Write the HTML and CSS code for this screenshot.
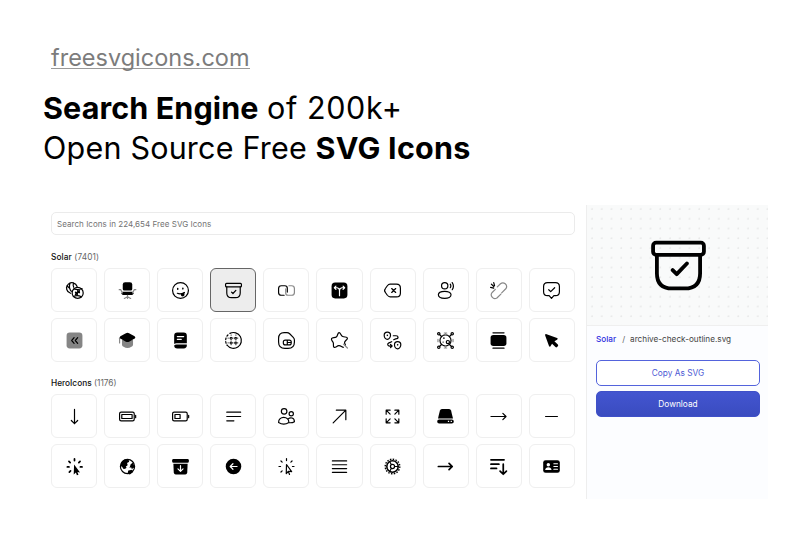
FILE: index.html
```html
<!DOCTYPE html>
<html lang="en">
<head>
<meta charset="utf-8">
<title>Free SVG Icons</title>
<link rel="stylesheet" href="styles.css">
</head>
<body>
<header class="hero">
  <a class="site"><span>freesvgicons.com</span></a>
  <h1><span class="line"><b class="t1">Search Engine</b> <span class="t2">of 200k+</span></span><span class="line"><span class="t3">Open Source Free</span> <b class="t4">SVG Icons</b></span></h1>
</header>
<main class="app">
  <section class="browser">
    <div class="search"><span>Search Icons in 224,654 Free SVG Icons</span></div>
    <h2 class="group"><b class="g1">Solar</b> <span class="g2">(7401)</span></h2>
    <div class="grid">
      <div class="tile"><svg viewBox="0 0 24 24"><path d="M7 15.500A6.800 6.800 0 1 1 15.300 7M6.500 2.500C5 6 5.500 10 8 13M11 2.500C10 4 10 6 11 8M2.500 6l3 3"/><circle cx="16" cy="15" r="7"/><path d="M11.500 10c3.500 1 7 1 10-.5M10.500 19.500c3.500-1.500 7-1.500 10 .5"/><path class="b" d="M13.500 17l4.500-4.500M13.500 14.500l2 2M16 12.500l2 2"/></svg></div>
      <div class="tile"><svg viewBox="0 0 24 24"><path class="f" d="M9 1.500h6q3 0 3 3V10q0 2-2 2H8q-2 0-2-2V4.500q0-3 3-3z"/><path class="f" d="M5.500 13.500h13l1 2q0 2.300-2 2.300h-11q-2 0-2-2.300z"/><path class="dim" d="M1.500 11h2l2 4M22.500 11h-2l-2 4M12 18v4M8 22l4-2 4 2"/></svg></div>
      <div class="tile"><svg viewBox="0 0 24 24"><circle cx="12" cy="12" r="10"/><path d="M8 15.500c3 1.200 6 .7 9-1"/><path class="f" d="M12.500 15.800l4.500-1.500v3a2.200 2.200 0 0 1-4.500 0z"/><ellipse class="f" cx="8.500" cy="10" rx="1" ry="1.400"/><ellipse class="f" cx="15" cy="9.500" rx="1" ry="1.400"/></svg></div>
      <div class="tile selected"><svg viewBox="0 0 24 24"><rect x="2" y="3" width="20" height="4.500" rx="1.200"/><path d="M3.500 7.500V15q0 6 6 6h5q6 0 6-6V7.500M9.500 14l1.800 1.800 3.700-4"/></svg></div>
      <div class="tile"><svg viewBox="0 0 24 24"><path d="M9 18H5.500Q2 18 2 14.500v-5Q2 6 5.500 6H10q3 0 3 3v5"/><path class="dim" d="M15 6h3.500Q22 6 22 9.500v5q0 3.500-3.500 3.500H14q-3 0-3-3v-5"/></svg></div>
      <div class="tile"><svg viewBox="0 0 24 24"><rect class="f" x="2" y="2" width="20" height="20" rx="4.500"/><path class="w" d="M12 18.500V12q0-3-3-3.500H6M12 12q0-3 3-3.500h3M7.500 6.500L5.500 8.500l2 2M16.500 6.500l2 2-2 2"/></svg></div>
      <div class="tile"><svg viewBox="0 0 24 24"><path d="M9 4h8q5 0 5 5v6q0 5-5 5H9q-2 0-3.500-2L3 14.500q-2-2.500 0-5L5.500 6Q7 4 9 4zM11 9.500l5 5M16 9.500l-5 5"/></svg></div>
      <div class="tile"><svg viewBox="0 0 24 24"><circle cx="11" cy="6" r="4"/><path d="M11 13c4.500 0 8 2 8 4.500S15.500 22 11 22s-8-1.500-8-4.500 3.500-4.500 8-4.500zM18 4c1 1.500 1 3 0 4.500M20.500 2c2 3 2 6 0 9"/></svg></div>
      <div class="tile"><svg viewBox="0 0 24 24"><path class="dim" d="M10.500 7.500l4-4q3-2.500 6 0t1 6l-5.500 5.500M8 10.500l-4 4q-2.500 3 0 6t6 1l5-5"/><path d="M2 8l4 1M6 2l1 4M3 4l3 3"/></svg></div>
      <div class="tile"><svg viewBox="0 0 24 24"><path d="M7 2h10q5 0 5 5v6.500q0 5-5 5h-2L12 22l-3-3.500H7q-5 0-5-5V7q0-5 5-5zM8.500 11l2.500 2.500L16 8.500"/></svg></div>
      <div class="tile"><svg viewBox="0 0 24 24"><rect class="g" x="2" y="2" width="20" height="20" rx="4"/><path d="M11.500 8.500L8.500 12l3 3.500M16 8.500L13 12l3 3.500"/></svg></div>
      <div class="tile"><svg viewBox="0 0 24 24"><path class="g" d="M5 11v6q0 2 2 3 5 3 10 0 2-1 2-3v-6z"/><path class="dim" d="M2 9v6"/><path class="f" d="M10 2.800q2-1 4 0l7 3.700q2 1.500 0 3l-7 4q-2 1-4 0l-7-4Q1 8 3 6.500z"/></svg></div>
      <div class="tile"><svg viewBox="0 0 24 24"><path class="f" d="M8 2h8q4 0 4 4v9.500H7q-2 0-3 1V6q0-4 4-4z"/><path class="f" d="M4 18.200q1-1.200 3-1.200h13v1q0 4-4 4H8q-4 0-4-3.800z"/><path class="w" d="M8 7h8M8 10.500h5"/></svg></div>
      <div class="tile"><svg viewBox="0 0 24 24"><path d="M4 18A10 10 0 1 0 7.500 3"/><path stroke-dasharray="2 2.500" d="M5 5a10 10 0 0 0-1 13"/><path class="dots" d="M9 5v15M15 5v15M5 9h15M5 15h15"/><path class="thin" d="M8.200 8.200h2v2h-2zM14 8.200h2v2h-2zM8.200 14h2v2h-2zM14 14h2v2h-2z"/></svg></div>
      <div class="tile"><svg viewBox="0 0 24 24"><path d="M9 2h3.500q2 0 3.500 1.500L20.500 8q1.500 1.500 1.500 3.500V14q0 8-8 8h-4q-8 0-8-8V9.500Q2 2 9 2z"/><path d="M10.500 11.500h5q2.500 0 2.500 2.500v1q0 2.500-2.500 2.500h-5Q8 17.500 8 15v-1q0-2.500 2.500-2.500zM13 11.500v6M13 14.500h5"/></svg></div>
      <div class="tile"><svg viewBox="0 0 24 24"><path d="M17 20.500c-2 0-3.500-2.500-6-2s-4.500 3-6 2 0-4-1-6-3-3-2-5 4-.5 6-2S9.500 2 11.500 2s2 4 4.500 5 6 0 6 2-3 3-3.500 5 1 2.500 1 4"/><path class="dim" d="M17 16.500l5 5"/></svg></div>
      <div class="tile"><svg viewBox="0 0 24 24"><path d="M5.500 1.500c2.300 0 4 1.700 4 4s-1.800 5-4 5-4-2.500-4-5 1.700-4 4-4zM18.500 13.500c2.300 0 4 1.700 4 4s-1.800 5-4 5-4-2.500-4-5 1.700-4 4-4zM13 6h3.500q2.500 0 2.500 2t-3 2l-2.500 1M11 13.500L7.500 15q-2 1-1.500 2.500t2.500 1.500H11M9.500 17l2 2-2 2"/><circle class="f" cx="5.500" cy="5.500" r="1"/><circle class="f" cx="18.500" cy="17.500" r="1"/></svg></div>
      <div class="tile"><svg viewBox="0 0 24 24"><circle cx="12" cy="12" r="7"/><circle cx="3.500" cy="3.500" r="1.500"/><circle cx="20.500" cy="3.500" r="1.500"/><circle cx="3.500" cy="20.500" r="1.500"/><circle cx="20.500" cy="20.500" r="1.500"/><path d="M5 5l2 2M19 5l-2 2M5 19l2-2M19 19l-2-2"/><path class="dim" d="M10.500 2.500h3M12 3v2M10.500 21.500h3M12 21v-2M2.500 10.500v3M21.500 10.500v3"/><circle cx="15" cy="14" r="2"/><circle class="f" cx="10" cy="9" r="1"/><circle class="f" cx="9" cy="14" r=".8"/></svg></div>
      <div class="tile"><svg viewBox="0 0 24 24"><rect class="f" x="2" y="5" width="20" height="14" rx="3.500"/><path d="M5 2.300h14M5 21.700h14"/></svg></div>
      <div class="tile"><svg viewBox="0 0 24 24"><path class="f" d="M4 5.800Q3.500 3.500 5.800 4L19 8.800q2 1 0 2.200l-3.300 2 4.300 4.200q1 1 0 2l-1 1q-1 1-2 0L12.700 16l-2 3.200q-1 1.500-2-.5z"/></svg></div>
    </div>
    <h2 class="group second"><b class="g3">HeroIcons</b> <span class="g4">(1176)</span></h2>
    <div class="grid">
      <div class="tile"><svg viewBox="0 0 24 24"><path d="M12 3v18M8 17l4 4 4-4"/></svg></div>
      <div class="tile"><svg viewBox="0 0 24 24"><path d="M4 6.500h14.500q2 0 2 2v7q0 2-2 2H4q-2 0-2-2v-7q0-2 2-2zM22.300 10.500v3"/><rect x="4.800" y="9.500" width="13" height="5"/></svg></div>
      <div class="tile"><svg viewBox="0 0 24 24"><path d="M4 6.500h14.500q2 0 2 2v7q0 2-2 2H4q-2 0-2-2v-7q0-2 2-2zM22.300 10.500v3"/><rect x="5" y="9.500" width="6.500" height="5"/></svg></div>
      <div class="tile"><svg viewBox="0 0 24 24"><path d="M3.500 6.500h17.500M3.500 12h17.500M3.500 17.500h9"/></svg></div>
      <div class="tile"><svg viewBox="0 0 24 24"><circle cx="9" cy="5.500" r="3.500"/><circle cx="18" cy="8.500" r="2.700"/><path d="M2 19.500c0-4 3-6.500 6.500-6.500s6.500 2.500 6.500 6.500c-4 2.500-9 2.500-13 0zM15 19.800c2.500.2 5 0 7-1.300 0-5-5-6-8-3.500"/></svg></div>
      <div class="tile"><svg viewBox="0 0 24 24"><path d="M4 20L20 4M8 4h12v12"/></svg></div>
      <div class="tile"><svg viewBox="0 0 24 24"><path d="M4 9V4h5M4 4l5 5M15 4h5v5M20 4l-5 5M4 15v5h5M4 20l5-5M15 20h5v-5M20 20l-5-5"/></svg></div>
      <div class="tile"><svg viewBox="0 0 24 24"><path class="f" d="M7.500 2.500h9q2 0 2.500 2l2.500 10H2.500L5 4.500q.5-2 2.500-2z"/><path class="f" fill-rule="evenodd" d="M4 15.800h16a2.500 2.500 0 0 1 0 5H4a2.500 2.500 0 0 1 0-5zm11 1.700v1.600h1.600v-1.600zm3.500 0v1.600h1.600v-1.600z"/></svg></div>
      <div class="tile"><svg viewBox="0 0 24 24"><path d="M2.500 12h19M17.500 8l4 4-4 4"/></svg></div>
      <div class="tile"><svg viewBox="0 0 24 24"><path d="M4.500 12h15"/></svg></div>
      <div class="tile"><svg viewBox="0 0 24 24"><path class="b" d="M12 2.500v2M5 5.500l1.500 1.500M19 5.500L17.500 7M3 12.500h2M19.500 12.500h2M5.500 19L7 17.500"/><path class="f" d="M11.500 9.500l7.500 10-3.300-.5 1.300 3.500-2 .7-1.200-3.500-2.800 2.300z"/></svg></div>
      <div class="tile"><svg viewBox="0 0 24 24"><circle cx="12" cy="12" r="9"/><path class="f" d="M13 3c1 2 2 3-.5 4s1 3-1 4-2 1-1 2-1 2-3 2-1-3-4-3c-1-5 4-10 9.500-9zM16 9l3-2 2 6-3.500 2-1-2-2 1zM13 17l5-1 1 3-4 3-3-1z"/></svg></div>
      <div class="tile"><svg viewBox="0 0 24 24"><rect class="f" x="1.500" y="2.500" width="21" height="4.800" rx="1.500"/><path class="f" d="M3 8.500h18l-.5 11q-.3 2.500-2.500 2.500H6q-2.200 0-2.500-2.500z"/><path class="w" d="M12 11v7M8.800 15l3.200 3.200 3.200-3.200"/></svg></div>
      <div class="tile"><svg viewBox="0 0 24 24"><circle class="f" cx="12" cy="12" r="9.800"/><path class="w" d="M16.500 12H8M11.300 8.500L7.800 12l3.500 3.500"/></svg></div>
      <div class="tile"><svg viewBox="0 0 24 24"><path d="M12 2v2.500M5 5l1.500 1.500M19 5l-1.500 1.500M2.500 12h2M19.500 12h2M5 19l1.500-1.500M12 9.500l6.500 9-4-.5-2.800 3zM14.300 18l1.500 4"/></svg></div>
      <div class="tile"><svg viewBox="0 0 24 24"><path d="M3 5h18M3 9.800h18M3 14.600h18M3 19.400h18"/></svg></div>
      <div class="tile"><svg viewBox="0 0 24 24"><circle class="ring" cx="12" cy="12" r="7.200"/><circle class="teeth" cx="12" cy="12" r="9.200"/><circle cx="12" cy="12" r="2.600"/><path d="M15 12h4M10.500 9.500l-2-3.500M10.500 14.500l-2 3.500"/></svg></div>
      <div class="tile"><svg viewBox="0 0 24 24"><path class="b" d="M3 12h17.500M16.500 8l4 4-4 4"/></svg></div>
      <div class="tile"><svg viewBox="0 0 24 24"><path class="b" d="M2.500 3.500h16.500M2.500 9h10M2.500 14.500h7M18 9v12.500M14 17.800l4 4 4-4"/></svg></div>
      <div class="tile"><svg viewBox="0 0 24 24"><rect class="f" x="1.500" y="4" width="21" height="16" rx="3"/><circle class="wf" cx="8" cy="9.800" r="2.200"/><path class="wf" d="M4 16.500q.5-3.500 4-3.500t4 3.500z"/><path class="w" d="M15 8.500h4.500M15 12h4.500M15 15.500h4.500"/></svg></div>
    </div>
  </section>
  <aside class="panel">
    <div class="preview"><svg viewBox="0 0 24 24"><rect x="2" y="3" width="20" height="4.800" rx="1.200"/><path d="M3.500 8v7q0 6 6 6h5q6 0 6-6V8M9.700 13.800l1.600 1.600 4-4.200"/></svg></div>
    <div class="details">
      <div class="path"><b class="p1">Solar</b><span class="p2">/</span><span class="p3">archive-check-outline.svg</span></div>
      <button class="btn copy"><span>Copy As SVG</span></button>
      <button class="btn download"><span>Download</span></button>
    </div>
  </aside>
</main>
</body>
</html>
```
FILE: styles.css
```css
* { box-sizing: border-box; }
body { margin: 0; width: 800px; height: 556px; overflow: hidden; background: #fff; color: #000; font-family: Inter, "Liberation Sans", sans-serif; }
.hero { height: 205px; padding: 42px 43px 0; }
.site { display: block; width: max-content; margin-left: 8px; height: 27px; line-height: 31px; font-size: 23.5px; color: #7c7c7c; border-bottom: 1.5px solid #999; }
h1 { margin: 19px 0 0; font-size: 30.500px; font-weight: 400; line-height: 40px; }
.line { display: block; white-space: nowrap; }
h1 b { font-weight: 700; }
.t1 { letter-spacing: .1px; }
.t2 { letter-spacing: .6px; }
.t3 { letter-spacing: .2px; }
.t4 { letter-spacing: .25px; }
.app { display: flex; height: 294px; }
.browser { width: 586px; padding: 7px 11px 0 51px; }
.search { height: 23px; border: 1px solid #ebebeb; border-radius: 5px; padding-left: 5px; font-size: 8px; letter-spacing: .05px; line-height: 22px; color: #737373; }
.group { margin: 16px 0 5px; height: 12px; line-height: 12px; font-size: 8.300px; font-weight: 400; color: #666; letter-spacing: .1px; white-space: nowrap; }
.group b { font-weight: 500; color: #111; }
.second { margin-top: 15px; letter-spacing: 0; }
.grid { display: grid; grid-template-columns: repeat(10, 1fr); gap: 6px 7px; }
.tile { height: 44px; border: 1px solid #efefef; border-radius: 6px; display: flex; align-items: center; justify-content: center; }
.selected { background: #ededed; border-color: #666; }
.tile svg { width: 19px; height: 19px; }
svg { display: block; fill: none; stroke: #000; stroke-width: 1.500; stroke-linecap: round; stroke-linejoin: round; }
.f { fill: #000; stroke: none; }
.g { fill: #858585; stroke: none; }
.w { stroke: #fff; }
.wf { fill: #fff; stroke: none; }
.dim { stroke: #888; }
.b { stroke-width: 2.200; }
.thin { stroke-width: 1; }
.dots { stroke-width: 1; stroke-dasharray: .5 2.500; }
.ring { stroke-width: 2; }
.teeth { stroke-width: 1.800; stroke-dasharray: 1.900 1.710; stroke-linecap: butt; }
.panel { width: 182px; border-left: 1px solid #eee; background: #fcfdff; }
.preview { height: 121px; display: flex; align-items: center; justify-content: center; padding-left: 1px; border-bottom: 1px solid #efefef; background: radial-gradient(circle at 5px 5px, #e7e8e8 .600px, transparent 1px) 0 -1px / 9.750px 9.750px, #f9fafa; }
.preview svg { width: 61px; height: 61px; }
.details { padding: 7px 8px 0 9px; }
.path { display: flex; height: 12px; margin-bottom: 15px; font-size: 8.200px; line-height: 12px; color: #444; white-space: nowrap; }
.p1 { font-weight: 500; color: #2d2de0; }
.p2 { margin: 0 5px 0 6px; color: #666; }
.btn { display: block; width: 100%; height: 26px; margin-bottom: 5px; padding: 1px 0 0; border-radius: 5px; font: 8.300px/23px Inter, sans-serif; text-align: center; }
.copy { border: 1px solid #5363dc; background: #fff; color: #4a58d4; }
.download { border: 1px solid #3f50c8; background: linear-gradient(#4355d0, #3a4cc0); color: #fff; }
```
